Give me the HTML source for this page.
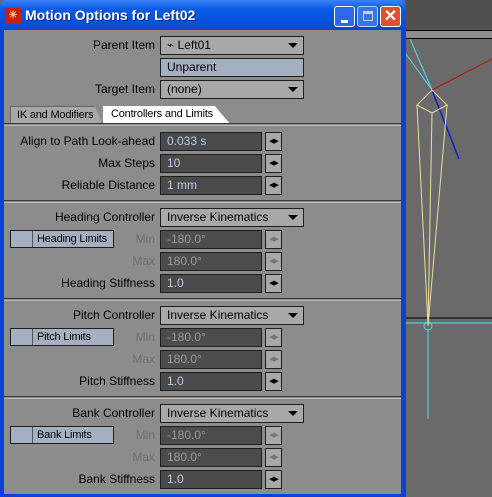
<!DOCTYPE html><html><head><style>
*{margin:0;padding:0;box-sizing:border-box}
body{width:492px;height:497px;overflow:hidden;background:#6a6a6a;font-family:"Liberation Sans",sans-serif;font-size:12px;position:relative}
.a{position:absolute;white-space:nowrap}
.lbl{position:absolute;right:337px;color:#000;text-align:right;white-space:nowrap;line-height:18px}
.dis{color:#6e6e6e}
.fld{position:absolute;left:160px;width:102px;height:19px;background:#4a4a4a;border:1px solid #1e1e1e;color:#b8ccee;padding-left:6px;line-height:17px;white-space:nowrap}
.fld.d{color:#9a9a9a;background:#4c4c4c}
.arr{position:absolute;left:265px;width:17px;height:19px;background:#a8a8a8;border:1px solid #1e1e1e;font-size:7px;text-align:center;line-height:17px;color:#000;letter-spacing:-1px}
.arr.d{color:#777}
.dd{position:absolute;left:160px;width:144px;height:19px;background:#a8a8a8;border:1px solid #1e1e1e;color:#000;padding-left:6px;line-height:17px;white-space:nowrap}
.dd:after{content:"";position:absolute;right:5px;top:6px;border-left:5px solid transparent;border-right:5px solid transparent;border-top:5px solid #000}
.sep{position:absolute;left:4px;width:397px;height:3px;border-top:1px solid #3a3a3a;border-bottom:1px solid #b8b8b8;background:#8c8c8c}
.lim{position:absolute;left:10px;width:104px;height:18px;border:1px solid #1e1e1e;background:#a4b0c0;line-height:16px;white-space:nowrap;font-size:11px;letter-spacing:-0.2px}
.lim span{position:absolute;left:21px;top:0;bottom:0;right:0;border-left:1px solid #555;padding-left:4px}
.tab{font-size:11px;letter-spacing:-0.2px}
</style></head><body>
<div class="a" style="left:405px;top:0;width:87px;height:30px;background:#505050"></div>
<div class="a" style="left:405px;top:30px;width:87px;height:9px;background:#8c8c8c;border-top:1px solid #000;border-bottom:1px solid #000"></div>
<svg class="a" style="left:405px;top:39px" width="87" height="458">
<line x1="0" y1="279" x2="87" y2="279" stroke="#333" stroke-width="2"/>
<line x1="0" y1="284" x2="87" y2="284" stroke="#5aa8b0" stroke-width="2"/>
<line x1="27" y1="51" x2="-10" y2="0" stroke="#5ad8e8"/><line x1="27" y1="51" x2="5" y2="0" stroke="#5ad8e8"/>
<line x1="27" y1="51" x2="87" y2="20" stroke="#c01010"/>
<line x1="27" y1="51" x2="54" y2="120" stroke="#1020c0" stroke-width="1.5"/>
<polygon points="27,51 12,66 27,74 42,66" fill="none" stroke="#e8e0a0"/>
<line x1="12" y1="66" x2="23" y2="287" stroke="#e8e0a0"/><line x1="42" y1="66" x2="23" y2="287" stroke="#e8e0a0"/><line x1="27" y1="74" x2="23" y2="287" stroke="#e8e0a0"/>
<line x1="23" y1="290" x2="23" y2="380" stroke="#5ad8e8"/>
<circle cx="23" cy="287" r="4" fill="none" stroke="#5ad8e8"/>
</svg>
<div class="a" style="left:0;top:0;width:406px;height:497px;background:#0842d8;border-radius:6px 6px 0 0"></div>
<div class="a" style="left:0;top:0;width:406px;height:30px;border-radius:6px 6px 0 0;background:linear-gradient(#3a82f6,#0a5ae8 30%,#0650d8 80%,#0a48c8)"></div>
<div class="a" style="left:5px;top:8px;width:16px;height:16px;background:#c82010;color:#ffd080;font-size:10px;font-weight:bold;line-height:16px;text-align:center">☀</div>
<div class="a" style="left:25px;top:7px;color:#fff;font-weight:bold;font-size:14px;text-shadow:1px 1px #0a2a80">Motion Options for Left02</div>
<div class="a" style="left:334px;top:6px;width:21px;height:21px;border:1px solid #fff;border-radius:3px;background:#2a6af0"><div class="a" style="left:6px;top:13px;width:7px;height:3px;background:#fff"></div></div>
<div class="a" style="left:357px;top:6px;width:21px;height:21px;border:1px solid #c0d0ff;border-radius:3px;background:#3a72e8"><div class="a" style="left:5px;top:4px;width:10px;height:10px;border:1px solid #c0d0ff;border-top-width:3px"></div></div>
<div class="a" style="left:380px;top:6px;width:21px;height:21px;border:1px solid #fff;border-radius:3px;background:#e05030;color:#fff;font-weight:bold;font-size:16px;line-height:19px;text-align:center">✕</div>
<div class="a" style="left:4px;top:30px;width:397px;height:464px;background:#8c8c8c"></div>

<div class="lbl" style="top:36px">Parent Item</div><div class="dd" style="top:36px">⌁ Left01</div>
<div class="a" style="left:160px;top:58px;width:144px;height:19px;background:#a4b0c0;border:1px solid #1e1e1e;padding-left:6px;line-height:17px">Unparent</div>
<div class="lbl" style="top:80px">Target Item</div><div class="dd" style="top:80px">(none)</div>
<div class="a tab" style="left:10px;top:106px;width:92px;height:17px;background:#a8a8a8;border:1px solid #666;border-bottom:none;padding-left:6px;line-height:16px;clip-path:polygon(0 0,92% 0,100% 100%,0 100%)">IK and Modifiers</div>
<div class="a tab" style="left:103px;top:106px;width:127px;height:18px;background:#fff;padding-left:8px;line-height:16px;clip-path:polygon(0 0,88% 0,100% 100%,0 100%)">Controllers and Limits</div>
<div class="sep" style="top:123px"></div>

<div class="lbl" style="top:132px">Align to Path Look-ahead</div><div class="fld" style="top:132px">0.033 s</div><div class="arr" style="top:132px">◀▶</div>
<div class="lbl" style="top:154px">Max Steps</div><div class="fld" style="top:154px">10</div><div class="arr" style="top:154px">◀▶</div>
<div class="lbl" style="top:176px">Reliable Distance</div><div class="fld" style="top:176px">1 mm</div><div class="arr" style="top:176px">◀▶</div>
<div class="sep" style="top:200px"></div>

<div class="lbl" style="top:208px">Heading Controller</div><div class="dd" style="top:208px">Inverse Kinematics</div>
<div class="lim" style="top:230px"><span>Heading Limits</span></div>
<div class="lbl dis" style="top:230px">Min</div><div class="fld d" style="top:230px">-180.0°</div><div class="arr d" style="top:230px">◀▶</div>
<div class="lbl dis" style="top:252px">Max</div><div class="fld d" style="top:252px">180.0°</div><div class="arr d" style="top:252px">◀▶</div>
<div class="lbl" style="top:274px">Heading Stiffness</div><div class="fld" style="top:274px">1.0</div><div class="arr" style="top:274px">◀▶</div>
<div class="sep" style="top:298px"></div>

<div class="lbl" style="top:306px">Pitch Controller</div><div class="dd" style="top:306px">Inverse Kinematics</div>
<div class="lim" style="top:328px"><span>Pitch Limits</span></div>
<div class="lbl dis" style="top:328px">Min</div><div class="fld d" style="top:328px">-180.0°</div><div class="arr d" style="top:328px">◀▶</div>
<div class="lbl dis" style="top:350px">Max</div><div class="fld d" style="top:350px">180.0°</div><div class="arr d" style="top:350px">◀▶</div>
<div class="lbl" style="top:372px">Pitch Stiffness</div><div class="fld" style="top:372px">1.0</div><div class="arr" style="top:372px">◀▶</div>
<div class="sep" style="top:396px"></div>

<div class="lbl" style="top:404px">Bank Controller</div><div class="dd" style="top:404px">Inverse Kinematics</div>
<div class="lim" style="top:426px"><span>Bank Limits</span></div>
<div class="lbl dis" style="top:426px">Min</div><div class="fld d" style="top:426px">-180.0°</div><div class="arr d" style="top:426px">◀▶</div>
<div class="lbl dis" style="top:448px">Max</div><div class="fld d" style="top:448px">180.0°</div><div class="arr d" style="top:448px">◀▶</div>
<div class="lbl" style="top:470px">Bank Stiffness</div><div class="fld" style="top:470px">1.0</div><div class="arr" style="top:470px">◀▶</div>
</body></html>
